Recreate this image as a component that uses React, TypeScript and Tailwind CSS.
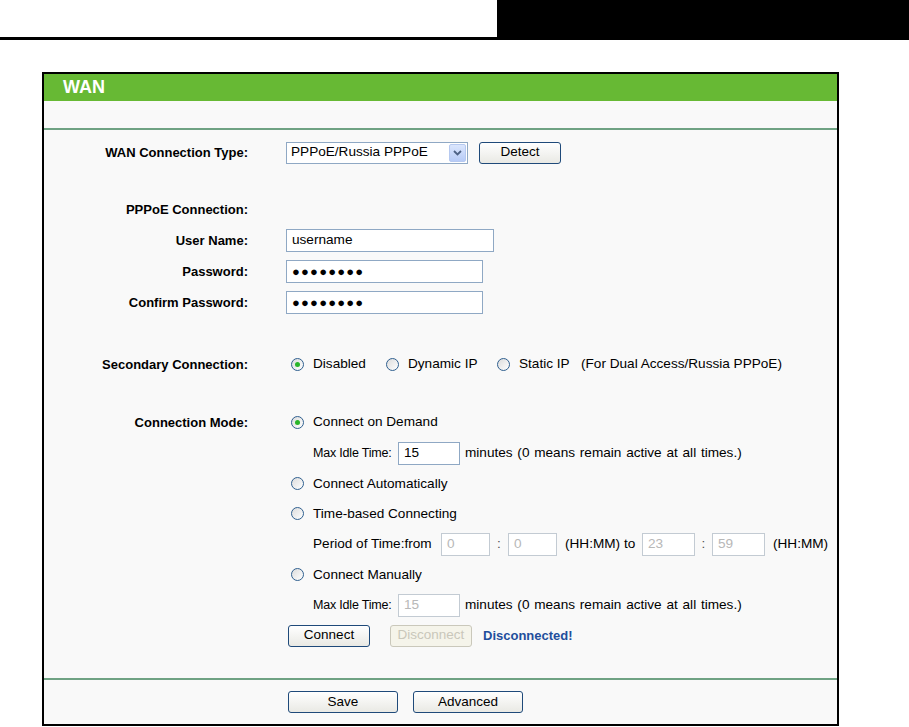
import React from 'react';

const font = { fontFamily: '"Liberation Sans", Arial, sans-serif' };

function Radio({ checked = false, first = true }: { checked?: boolean; first?: boolean }) {
  return (
    <span
      className={`${first ? 'ml-[5px]' : ''} mr-[9px] flex h-[13px] w-[13px] shrink-0 items-center justify-center rounded-full border border-[#2f5f8f] bg-gradient-to-br from-[#dcdcdc] to-white`}
    >
      {checked && <span className="h-[5px] w-[5px] rounded-full bg-[#29b529]" />}
    </span>
  );
}

function Field({
  value,
  width,
  disabled = false,
  dots = false,
}: {
  value: string;
  width: string;
  disabled?: boolean;
  dots?: boolean;
}) {
  return (
    <div
      className={`flex h-[23px] shrink-0 items-center border bg-white px-[5px] ${width} ${
        disabled ? 'border-[#c3cbd3] text-[#b8b8b8]' : 'border-[#8fa8c4] text-black'
      }`}
    >
      {dots ? (
        <span className="text-[13px] leading-none tracking-[1.2px]">●●●●●●●●</span>
      ) : (
        value
      )}
    </div>
  );
}

function Btn({
  label,
  width,
  disabled = false,
}: {
  label: string;
  width: string;
  disabled?: boolean;
}) {
  return (
    <div
      className={`flex h-[22px] items-center justify-center rounded-[3px] border text-[13.5px] ${width} ${
        disabled
          ? 'border-[#cac8bb] bg-[#f5f4ea] text-[#c9c7ba]'
          : 'border-[#1f4a7a] bg-gradient-to-b from-white to-[#e9e9e4] text-black'
      }`}
    >
      {label}
    </div>
  );
}

function Row({
  label,
  h,
  children,
}: {
  label?: string;
  h: string;
  children?: React.ReactNode;
}) {
  return (
    <div className={`flex items-center ${h}`}>
      <div className="w-[204px] shrink-0 text-right text-[13px] font-bold">{label}</div>
      <div className="ml-[38px] flex items-center whitespace-nowrap text-[13.6px]">{children}</div>
    </div>
  );
}

export default function App() {
  return (
    <div className="min-h-[727px] w-[909px] bg-white text-[13px] text-black" style={font}>
      <div className="flex h-[37px]">
        <div className="w-[497px] bg-white" />
        <div className="flex-1 bg-black" />
      </div>
      <div className="h-[3px] bg-black" />

      <div className="ml-[42px] mt-[32px] w-[797px] border-2 border-black bg-[#f9f9f9]">
        <div className="flex h-[27px] items-center bg-[#67b934] pl-[19px] text-[18px] font-bold text-white">
          WAN
        </div>
        <div className="h-[29px] border-b-2 border-[#6fa283]" />

        <div className="pt-[7px]">
          <Row label="WAN Connection Type:" h="h-[31px]">
            <div className="flex h-[22px] w-[182px] items-center justify-between border border-[#8fa8c4] bg-white pl-[4px] pr-[1px]">
              <span>PPPoE/Russia PPPoE</span>
              <span className="flex h-[18px] w-[17px] items-center justify-center rounded-[2px] border border-[#b6c9f0] bg-gradient-to-b from-[#dbe6fd] to-[#b7cbf7]">
                <svg width="9" height="6" viewBox="0 0 9 6">
                  <path d="M1 1 L4.5 4.5 L8 1" fill="none" stroke="#4d6185" strokeWidth="1.8" />
                </svg>
              </span>
            </div>
            <div className="ml-[11px]">
              <Btn label="Detect" width="w-[82px]" />
            </div>
          </Row>

          <div className="h-[26px]" />
          <Row label="PPPoE Connection:" h="h-[31px]" />
          <Row label="User Name:" h="h-[31px]">
            <Field value="username" width="w-[208px]" />
          </Row>
          <Row label="Password:" h="h-[31px]">
            <Field value="" dots width="w-[197px]" />
          </Row>
          <Row label="Confirm Password:" h="h-[31px]">
            <Field value="" dots width="w-[197px]" />
          </Row>

          <div className="h-[31px]" />
          <Row label="Secondary Connection:" h="h-[31px]">
            <Radio checked />
            <span className="w-[73px]">Disabled</span>
            <Radio first={false} />
            <span className="w-[89px]">Dynamic IP</span>
            <Radio first={false} />
            <span className="w-[62px]">Static IP</span>
            <span>(For Dual Access/Russia PPPoE)</span>
          </Row>

          <div className="h-[27px]" />
          <Row label="Connection Mode:" h="h-[31px]">
            <Radio checked />
            <span>Connect on Demand</span>
          </Row>
          <Row h="h-[31px]">
            <span className="ml-[27px] w-[85px] text-[12.5px] tracking-[-0.2px]">Max Idle Time:</span>
            <Field value="15" width="w-[62px]" />
            <span className="ml-[5px] [word-spacing:1px]">
              minutes (0 means remain active at all times.)
            </span>
          </Row>
          <Row h="h-[30px]">
            <Radio />
            <span>Connect Automatically</span>
          </Row>
          <Row h="h-[30px]">
            <Radio />
            <span>Time-based Connecting</span>
          </Row>
          <Row h="h-[31px]">
            <span className="ml-[27px] w-[128px]">Period of Time:from</span>
            <Field value="0" disabled width="w-[49px]" />
            <span className="w-[18px] text-center text-[#555]">:</span>
            <Field value="0" disabled width="w-[49px]" />
            <span className="ml-[8px] w-[77px]">(HH:MM) to</span>
            <Field value="23" disabled width="w-[53px]" />
            <span className="w-[17px] text-center text-[#555]">:</span>
            <Field value="59" disabled width="w-[53px]" />
            <span className="ml-[8px]">(HH:MM)</span>
          </Row>
          <Row h="h-[30px]">
            <Radio />
            <span>Connect Manually</span>
          </Row>
          <Row h="h-[31px]">
            <span className="ml-[27px] w-[85px] text-[12.5px] tracking-[-0.2px]">Max Idle Time:</span>
            <Field value="15" disabled width="w-[62px]" />
            <span className="ml-[5px] [word-spacing:1px]">
              minutes (0 means remain active at all times.)
            </span>
          </Row>
          <Row h="h-[29px]">
            <div className="ml-[2px]">
              <Btn label="Connect" width="w-[82px]" />
            </div>
            <div className="ml-[20px]">
              <Btn label="Disconnect" width="w-[82px]" disabled />
            </div>
            <span className="ml-[11px] text-[13px] font-bold text-[#1f4e9c]">Disconnected!</span>
          </Row>
          <div className="h-[28px]" />
        </div>

        <div className="flex h-[46px] items-center border-t-2 border-[#6fa283]">
          <div className="ml-[244px] flex items-center gap-[15px]">
            <Btn label="Save" width="w-[110px]" />
            <Btn label="Advanced" width="w-[110px]" />
          </div>
        </div>
      </div>
    </div>
  );
}
